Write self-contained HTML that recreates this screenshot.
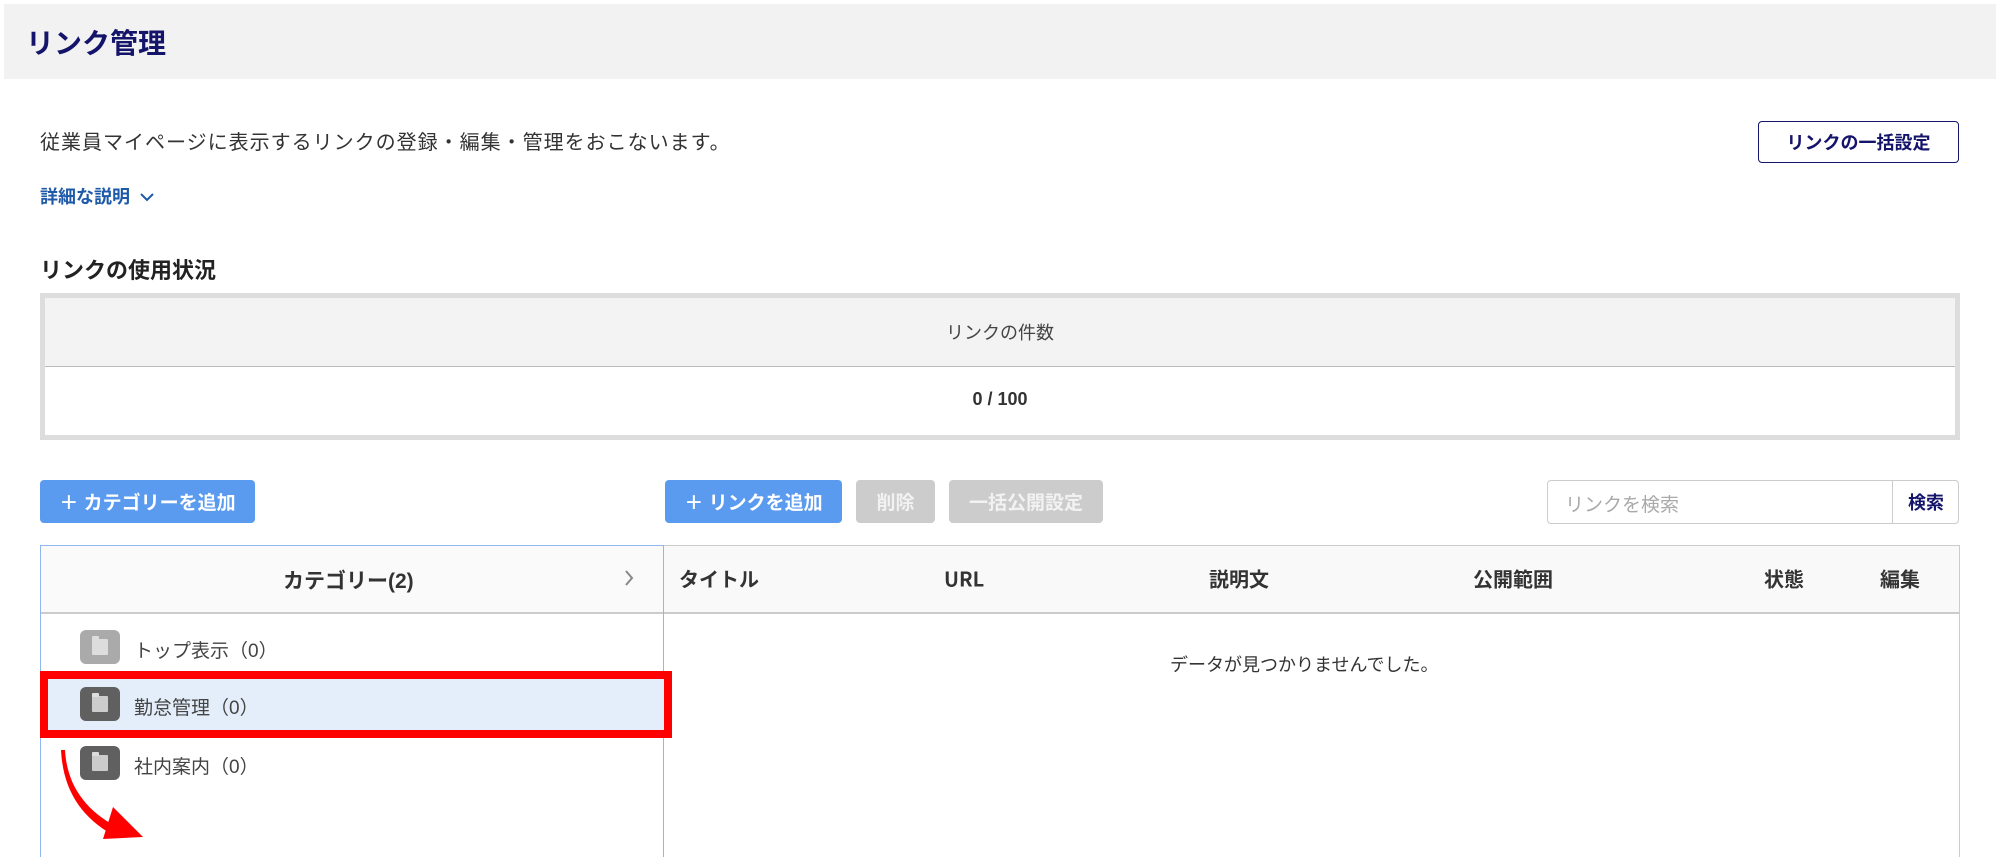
<!DOCTYPE html>
<html style="overflow:hidden;height:857px"><head><meta charset="utf-8"><style>
*{margin:0;padding:0;box-sizing:border-box}
body{width:2000px;height:857px;overflow:hidden;background:#fff;font-family:"Liberation Sans","Noto Sans CJK JP",sans-serif;color:#333;position:relative}
.a{position:absolute;white-space:nowrap}
.btn{position:absolute;border-radius:4px;color:#fff;font-weight:bold;font-size:19px;display:flex;align-items:center;justify-content:center}
.fold{position:absolute;left:80px;width:40px;height:34px;border-radius:6px}
.fold i{position:absolute;left:12px;top:9px;width:16px;height:16px;background:#ddd;border-radius:1px}
.fold i:before{content:"";position:absolute;left:0;top:-3px;width:7px;height:4px;background:#ddd;border-radius:1px 1px 0 0}
.th{position:absolute;top:578px;transform:translateY(-50%);font-weight:bold;font-size:20px;color:#333;font-family:"Noto Sans CJK JP",sans-serif}
</style></head><body>
<div class="a" style="left:4px;top:4px;width:1992px;height:75px;background:#f2f2f2"></div>
<div class="a" style="left:26px;top:22px;font-size:28px;font-weight:bold;color:#14146a">リンク管理</div>
<div class="a" style="left:40px;top:126px;font-size:20px;color:#333;letter-spacing:1px">従業員マイページに表示するリンクの登録・編集・管理をおこないます。</div>
<div class="a" style="left:1758px;top:121px;width:201px;height:42px;border:1.5px solid #14146a;border-radius:4px;display:flex;align-items:center;justify-content:center;font-size:18px;font-weight:bold;color:#14146a">リンクの一括設定</div>
<div class="a" style="left:40px;top:183px;font-size:18px;font-weight:bold;color:#1f5aa8">詳細な説明 <svg width="16" height="12" viewBox="0 0 16 12" style="margin-left:4px"><path d="M2 3 L8 9 L14 3" fill="none" stroke="#1f5aa8" stroke-width="2"/></svg></div>
<div class="a" style="left:40px;top:253px;font-size:22px;font-weight:bold;color:#222">リンクの使用状況</div>
<div class="a" style="left:40px;top:293px;width:1920px;height:147px;border:5px solid #ddd;background:#fff">
 <div style="height:69px;background:#f3f3f3;border-bottom:1.5px solid #bbb;display:flex;align-items:center;justify-content:center;font-size:18px;color:#444">リンクの件数</div>
 <div style="height:64px;display:flex;align-items:center;justify-content:center;font-size:18px;font-weight:bold;color:#333">0 / 100</div>
</div>
<div class="btn" style="left:40px;top:480px;width:215px;height:43px;background:#5a9bef">＋ カテゴリーを追加</div>
<div class="btn" style="left:665px;top:480px;width:177px;height:43px;background:#5a9bef">＋ リンクを追加</div>
<div class="btn" style="left:856px;top:480px;width:79px;height:43px;background:#ccc;color:#f2f2f2">削除</div>
<div class="btn" style="left:949px;top:480px;width:154px;height:43px;background:#ccc;color:#f2f2f2">一括公開設定</div>
<div class="a" style="left:1547px;top:480px;width:412px;height:44px;border:1px solid #ccc;border-radius:4px;background:#fff">
 <div style="position:absolute;left:17px;top:9px;font-size:19px;color:#aaa">リンクを検索</div>
 <div style="position:absolute;left:344px;top:0;width:1px;height:42px;background:#ccc"></div>
 <div style="position:absolute;left:345px;top:0;width:66px;height:42px;display:flex;align-items:center;justify-content:center;font-size:18px;font-weight:bold;color:#14146a">検索</div>
</div>
<!-- right table -->
<div class="a" style="left:663px;top:545px;width:1297px;height:312px;border:1.5px solid #ccc;border-bottom:none;background:#fff"></div>
<div class="a" style="left:664px;top:546px;width:1295px;height:68px;background:#f9f9f9;border-bottom:2px solid #ccc"></div>
<div class="th" style="left:679px">タイトル</div>
<div class="th" style="left:944px">URL</div>
<div class="th" style="left:1209px">説明文</div>
<div class="th" style="left:1473px">公開範囲</div>
<div class="th" style="left:1764px">状態</div>
<div class="th" style="left:1880px">編集</div>
<div class="a" style="left:1170px;top:651px;font-size:18px;color:#333">データが見つかりませんでした。</div>
<!-- left panel -->
<div class="a" style="left:40px;top:545px;width:624px;height:312px;border:1.5px solid #8fb8ef;border-bottom:none;background:#fff"></div>
<div class="a" style="left:41px;top:546px;width:622px;height:68px;background:#fafafa;border-bottom:2px solid #ccc"></div>
<div class="a" style="left:283px;top:565px;font-size:21px;font-weight:bold;color:#333">カテゴリー(2)</div>
<svg class="a" style="left:622px;top:568px" width="14" height="20" viewBox="0 0 14 20"><path d="M4 3 L10 10 L4 17" fill="none" stroke="#888" stroke-width="2"/></svg>
<div class="a" style="left:45px;top:676px;width:622px;height:57px;background:#e4eefa"></div>
<div class="fold" style="top:630px;background:#aaa"><i></i></div>
<div class="a" style="left:134px;top:636px;font-size:19px;color:#444">トップ表示（0）</div>
<div class="fold" style="top:687px;background:#606060"><i style="background:#ccc"></i></div>
<div class="a" style="left:134px;top:693px;font-size:19px;color:#444">勤怠管理（0）</div>
<div class="fold" style="top:746px;background:#606060"><i style="background:#ccc"></i></div>
<div class="a" style="left:134px;top:752px;font-size:19px;color:#444">社内案内（0）</div>
<div class="a" style="left:40px;top:671px;width:632px;height:67px;border:8px solid #f00"></div>
<svg class="a" style="left:55px;top:745px" width="110" height="100" viewBox="0 0 110 100">
<path d="M10 5 C12 40 30 65 62 82 L58 90 C26 72 8 45 6 5 Z" fill="#f00"/>
<path d="M58 62 L88 92 L48 94 Z" fill="#f00"/>
</svg>
</body></html>
